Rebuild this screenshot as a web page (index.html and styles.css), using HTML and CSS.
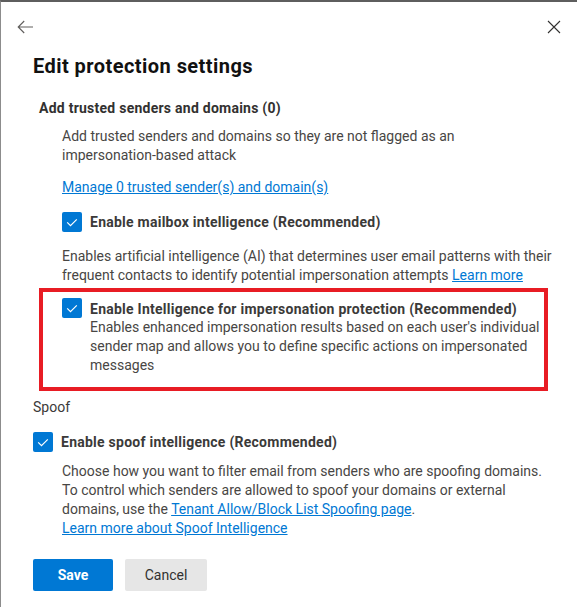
FILE: index.html
```html
<!DOCTYPE html>
<html lang="en">
<head>
<meta charset="utf-8">
<title>Edit protection settings</title>
<link rel="stylesheet" href="styles.css">
</head>
<body>
<div class="panel">
  <div class="header">
    <button class="icon-btn" aria-label="Back">
      <svg width="16" height="16" viewBox="0 0 16 16"><path d="M16 8H1.2M7.2 2L1.2 8l6 6" fill="none" stroke="#605e5c" stroke-width="1.1"/></svg>
    </button>
    <button class="icon-btn" aria-label="Close">
      <svg width="16" height="16" viewBox="0 0 16 16"><path d="M2 2l12 12M14 2L2 14" fill="none" stroke="#323130" stroke-width="1.1"/></svg>
    </button>
  </div>
  <div class="content">
    <h1 class="title">Edit protection settings</h1>
    <h2 class="section-heading">Add trusted senders and domains (0)</h2>
    <p class="desc indent first">Add trusted senders and domains so they are not flagged as an<br>impersonation-based attack</p>
    <p class="indent link-line"><a href="#">Manage 0 trusted sender(s) and domain(s)</a></p>
    <div class="check-row indent row-gap">
      <span class="checkbox"><svg width="20" height="20" viewBox="0 0 20 20"><path d="M5.2 10.4l3.3 3.3L14.8 7.4" fill="none" stroke="#fff" stroke-width="1.2"/></svg></span>
      <span class="check-label">Enable mailbox intelligence (Recommended)</span>
    </div>
    <p class="desc indent after-row">Enables artificial intelligence (AI) that determines user email patterns with their<br>frequent contacts to identify potential impersonation attempts <a href="#">Learn more</a></p>
    <div class="highlight">
      <span class="checkbox"><svg width="20" height="20" viewBox="0 0 20 20"><path d="M5.2 10.4l3.3 3.3L14.8 7.4" fill="none" stroke="#fff" stroke-width="1.2"/></svg></span>
      <div class="highlight-text">
        <div class="check-label tight">Enable Intelligence for impersonation protection (Recommended)</div>
        <p class="desc nowrap">Enables enhanced impersonation results based on each user's individual<br>sender map and allows you to define specific actions on impersonated<br>messages</p>
      </div>
    </div>
    <h3 class="group-label">Spoof</h3>
    <div class="check-row row-gap">
      <span class="checkbox"><svg width="20" height="20" viewBox="0 0 20 20"><path d="M5.2 10.4l3.3 3.3L14.8 7.4" fill="none" stroke="#fff" stroke-width="1.2"/></svg></span>
      <span class="check-label">Enable spoof intelligence (Recommended)</span>
    </div>
    <p class="desc indent spoof-desc">Choose how you want to filter email from senders who are spoofing domains.<br>To control which senders are allowed to spoof your domains or external<br>domains, use the <a href="#">Tenant Allow/Block List Spoofing page</a>.<br><a href="#">Learn more about Spoof Intelligence</a></p>
    <div class="actions">
      <button class="btn btn-primary">Save</button>
      <button class="btn btn-default">Cancel</button>
    </div>
  </div>
</div>
</body>
</html>
```

FILE: styles.css
```css
html, body {
  height: 100%;
}
body {
  margin: 0;
  box-sizing: border-box;
  border-top: 2px solid #5e5e5e;
  border-left: 1px solid #8c8c8c;
  background: #ffffff;
  font-family: Roboto, "Liberation Sans", sans-serif;
  font-size: 14px;
  color: #323130;
}
.panel {
  display: flex;
  flex-direction: column;
}
.header {
  display: flex;
  justify-content: space-between;
  align-items: center;
  padding: 17px 15px 0 16px;
}
.icon-btn {
  display: flex;
  width: 16px;
  height: 16px;
  padding: 0;
  margin: 0;
  border: 0;
  background: none;
}
.content {
  padding: 0 17px 0 32px;
  display: flex;
  flex-direction: column;
  align-items: flex-start;
}
.title {
  margin: 17px 0 0 0;
  font-size: 20px;
  line-height: 28px;
  font-weight: 700;
  letter-spacing: 0.45px;
  color: #111111;
}
.section-heading {
  margin: 18px 0 0 6px;
  font-size: 14px;
  line-height: 20px;
  font-weight: 700;
  letter-spacing: 0.25px;
  color: #323130;
}
.desc {
  margin: 0;
  font-size: 14px;
  line-height: 19px;
  color: #484644;
}
.nowrap {
  white-space: nowrap;
}
.indent {
  margin-left: 29px;
}
.first {
  margin-top: 9px;
}
a {
  color: #0078d4;
  text-decoration: underline;
}
.link-line {
  margin-top: 13px;
  margin-bottom: 0;
  line-height: 19px;
}
.check-row {
  display: flex;
  align-items: center;
  gap: 8px;
  height: 20px;
}
.row-gap {
  margin-top: 15px;
}
.checkbox {
  display: flex;
  flex: none;
  width: 20px;
  height: 20px;
  border-radius: 2px;
  background: #0078d4;
}
.check-label {
  font-weight: 700;
  line-height: 20px;
  letter-spacing: 0.25px;
  color: #3b3a39;
  white-space: nowrap;
}
.after-row {
  margin-top: 15px;
}
.highlight {
  margin: 3px 0 0 6px;
  box-sizing: border-box;
  width: 509px;
  border: 4px solid #e81c24;
  padding: 6px 0 12px 19px;
  display: flex;
  align-items: flex-start;
  gap: 8px;
}
.highlight-text {
  margin-top: 2px;
}
.check-label.tight {
  line-height: 18px;
}
.group-label {
  margin: 7px 0 0 0;
  font-size: 14px;
  line-height: 19px;
  font-weight: 400;
  color: #3b3a39;
}
.spoof-desc {
  margin-top: 10px;
}
.actions {
  margin-top: 21px;
  display: flex;
  gap: 12px;
}
.btn {
  height: 32px;
  border: 0;
  border-radius: 2px;
  font-family: Roboto, "Liberation Sans", sans-serif;
  font-size: 14px;
  padding: 0;
}
.btn-primary {
  width: 80px;
  background: #0078d4;
  color: #ffffff;
  font-weight: 700;
}
.btn-default {
  width: 82px;
  background: #e6e6e6;
  color: #323130;
  font-weight: 400;
}
```
